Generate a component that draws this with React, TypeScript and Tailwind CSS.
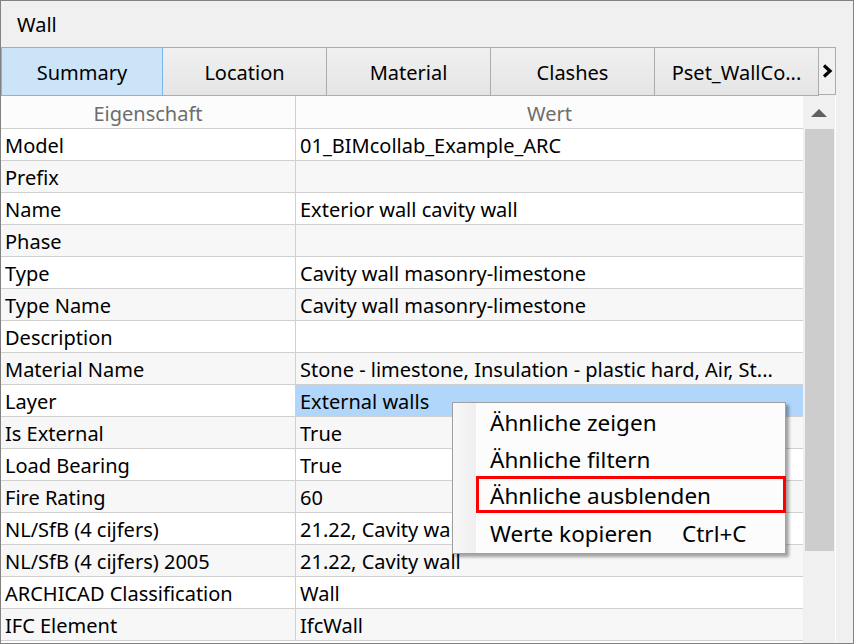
import React from "react";

const rows: [string, string][] = [
  ["Model", "01_BIMcollab_Example_ARC"],
  ["Prefix", ""],
  ["Name", "Exterior wall cavity wall"],
  ["Phase", ""],
  ["Type", "Cavity wall masonry-limestone"],
  ["Type Name", "Cavity wall masonry-limestone"],
  ["Description", ""],
  ["Material Name", "Stone - limestone, Insulation - plastic hard, Air, St..."],
  ["Layer", "External walls"],
  ["Is External", "True"],
  ["Load Bearing", "True"],
  ["Fire Rating", "60"],
  ["NL/SfB (4 cijfers)", "21.22, Cavity wall"],
  ["NL/SfB (4 cijfers) 2005", "21.22, Cavity wall"],
  ["ARCHICAD Classification", "Wall"],
  ["IFC Element", "IfcWall"],
];

const tabs = ["Summary", "Location", "Material", "Clashes", "Pset_WallCo..."];

export default function App() {
  return (
    <div
      className="relative w-[854px] h-[644px] border border-[#828282] bg-[#f0f0f0] text-black flex flex-col overflow-hidden"
      style={{ fontFamily: '"Noto Sans", "Open Sans", sans-serif' }}
    >
      {/* Title */}
      <div className="h-[46px] flex items-center pl-[16px] pt-[2px] text-[20px] shrink-0">Wall</div>

      {/* Tabs */}
      <div className="h-[49px] flex shrink-0">
        {tabs.map((t, i) => (
          <div
            key={t}
            className={
              i === 0
                ? "w-[162px] h-[49px] flex items-center justify-center pt-[2px] text-[20px] bg-[#cce4f7] border border-[#7eb4ea]"
                : "w-[164px] h-[49px] flex items-center justify-center pt-[2px] text-[20px] bg-gradient-to-b from-[#f0f0f0] to-[#e5e5e5] border border-l-0 border-[#acacac]"
            }
          >
            {t}
          </div>
        ))}
        <div className="w-[17px] h-[48px] flex items-center justify-center border border-l-0 border-[#acacac] bg-[#f0f0f0]">
          <svg width="11" height="14" viewBox="0 0 11 14">
            <path d="M2 1.5 L8 7 L2 12.5" stroke="#000" strokeWidth="3.2" fill="none" />
          </svg>
        </div>
      </div>

      {/* Grid area */}
      <div className="flex flex-1 min-h-0">
        <div className="w-[802px] flex flex-col bg-white">
          <div className="h-[33px] flex border-b border-[#d0d0d0] bg-[#fcfcfc] text-[#6d6d6d] text-[20px] shrink-0">
            <div className="w-[295px] border-r border-[#d0d0d0] flex items-center justify-center pt-[3px]">Eigenschaft</div>
            <div className="flex-1 flex items-center justify-center pt-[3px]">Wert</div>
          </div>
          {rows.map(([k, v], i) => (
            <div
              key={k}
              className={
                "h-[32px] flex border-b border-[#d0d0d0] text-[20px] shrink-0 " +
                (i % 2 === 1 ? "bg-[#f7f7f7]" : "bg-white")
              }
            >
              <div className="w-[295px] border-r border-[#d0d0d0] flex items-center pl-[4px] pt-[3px] whitespace-nowrap overflow-hidden">
                {k}
              </div>
              <div
                className={
                  "flex-1 flex items-center pl-[4px] pt-[3px] whitespace-nowrap overflow-hidden " +
                  (k === "Layer" ? "bg-[#b0d6fb]" : "")
                }
              >
                {v}
              </div>
            </div>
          ))}
        </div>
        {/* Scrollbar */}
        <div className="w-[33px] bg-[#f0f0f0] flex flex-col items-center border-r border-white">
          <div className="h-[33px] w-full flex items-center justify-center">
            <svg width="16" height="9" viewBox="0 0 16 9">
              <path d="M0 9 L8 1 L16 9 Z" fill="#606060" />
            </svg>
          </div>
          <div className="w-[29px] h-[422px] bg-[#cdcdcd]" />
        </div>
      </div>

      {/* Context menu */}
      <div className="absolute left-[451px] top-[401px] w-[334px] h-[152px] bg-[#fcfcfc] border border-[#a0a0a0] shadow-[3px_3px_3px_rgba(0,0,0,0.35)] text-[22.5px] flex">
        <div className="w-[23px] bg-gradient-to-r from-[#f7f7f7] to-[#efefef]" />
        <div className="flex-1 flex flex-col pt-[1px]">
          <div className="h-[37px] flex items-center pl-[14px] pt-[2px]">Ähnliche zeigen</div>
          <div className="h-[36px] flex items-center pl-[14px] pt-[2px]">Ähnliche filtern</div>
          <div className="h-[37px] flex items-center pl-[11px] pt-[2px] border-[3px] border-[#ff0000] mr-[-1px]">
            Ähnliche ausblenden
          </div>
          <div className="h-[40px] flex items-center pl-[14px] pt-[2px]">
            <span className="w-[192px]">Werte kopieren</span>
            <span>Ctrl+C</span>
          </div>
        </div>
      </div>
    </div>
  );
}
